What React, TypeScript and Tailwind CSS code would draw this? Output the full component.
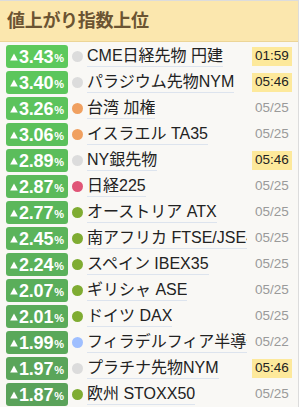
import React from "react";

type Row = {
  pct: string;
  dot: string;
  name: string;
  time: string;
  live?: boolean;
  badge: string;
};

const rows: Row[] = [
  { pct: "3.43", dot: "bg-[#dcdcdc]", name: "CME日経先物 円建", time: "01:59", live: true, badge: "bg-[#5cc95c]" },
  { pct: "3.40", dot: "bg-[#dcdcdc]", name: "パラジウム先物NYM", time: "05:46", live: true, badge: "bg-[#5cc65c]" },
  { pct: "3.26", dot: "bg-[#f0a060]", name: "台湾 加権", time: "05/25", badge: "bg-[#5cc35c]" },
  { pct: "3.06", dot: "bg-[#f0a060]", name: "イスラエル TA35", time: "05/25", badge: "bg-[#5bc05b]" },
  { pct: "2.89", dot: "bg-[#dcdcdc]", name: "NY銀先物", time: "05:46", live: true, badge: "bg-[#5bbd5b]" },
  { pct: "2.87", dot: "bg-[#e05577]", name: "日経225", time: "05/25", badge: "bg-[#5bba5b]" },
  { pct: "2.77", dot: "bg-[#7fac32]", name: "オーストリア ATX", time: "05/25", badge: "bg-[#5bb75b]" },
  { pct: "2.45", dot: "bg-[#7fac32]", name: "南アフリカ FTSE/JSE40", time: "05/25", badge: "bg-[#5bb45b]" },
  { pct: "2.24", dot: "bg-[#7fac32]", name: "スペイン IBEX35", time: "05/25", badge: "bg-[#5bb15b]" },
  { pct: "2.07", dot: "bg-[#7fac32]", name: "ギリシャ ASE", time: "05/25", badge: "bg-[#5aae5a]" },
  { pct: "2.01", dot: "bg-[#7fac32]", name: "ドイツ DAX", time: "05/25", badge: "bg-[#5aab5a]" },
  { pct: "1.99", dot: "bg-[#9fbfff]", name: "フィラデルフィア半導体", time: "05/22", badge: "bg-[#5aa85a]" },
  { pct: "1.97", dot: "bg-[#dcdcdc]", name: "プラチナ先物NYM", time: "05:46", live: true, badge: "bg-[#5aa55a]" },
  { pct: "1.87", dot: "bg-[#7fac32]", name: "欧州 STOXX50", time: "05/25", badge: "bg-[#5aa25a]" },
];

const font = "font-['Liberation_Sans','Noto_Sans_CJK_JP',sans-serif]";

const Up = () => (
  <svg width="8" height="8" viewBox="0 0 8 8" className="mr-[1px] self-center mt-[2px]">
    <polygon points="4,0.5 7.8,7.5 0.2,7.5" fill="#fff" />
  </svg>
);

const App = () => {
  return (
    <div className={`w-[299px] h-[407px] border-t border-r border-[#dcdcdc] bg-[#f9f8f5] ${font}`}>
      <div className="h-[41px] flex items-center pl-[7px] bg-[#fbe7ae] border-b border-[#ecd597]">
        <span className="text-[18px] font-bold text-[#6b5432] leading-none tracking-[-0.3px]">値上がり指数上位</span>
      </div>
      <div className="pt-[1px]">
        {rows.map((row) => (
          <div key={row.name} className="h-[26px] flex items-center pl-[6px] pr-[6px]">
            <div className={`w-[62px] h-[23px] shrink-0 rounded-[3px] ${row.badge} flex items-center justify-center text-white font-bold font-['Liberation_Sans',sans-serif] leading-none`}>
              <Up />
              <span className="text-[18px] tracking-[-0.2px] mt-[1px]">{row.pct}</span>
              <span className="text-[11px] ml-[1px] mt-[5px]">%</span>
            </div>
            <span className={`ml-[4px] w-[11px] h-[11px] rounded-full shrink-0 ${row.dot}`} />
            <div className="ml-[4px] flex-1 min-w-0 h-full flex items-center overflow-hidden">
              <span className="max-w-[160px] overflow-hidden whitespace-nowrap text-[16px] leading-[20px] text-[#222] border-b border-[#dde4ee]">
                {row.name}
              </span>
            </div>
            <span
              className={`shrink-0 ml-[4px] w-[40px] h-[19px] flex items-center justify-center text-[13.5px] leading-none ${
                row.live ? "bg-[#fde99b] text-[#222]" : "text-[#9a9a9a]"
              }`}
            >
              {row.time}
            </span>
          </div>
        ))}
      </div>
    </div>
  );
};

export default App;
